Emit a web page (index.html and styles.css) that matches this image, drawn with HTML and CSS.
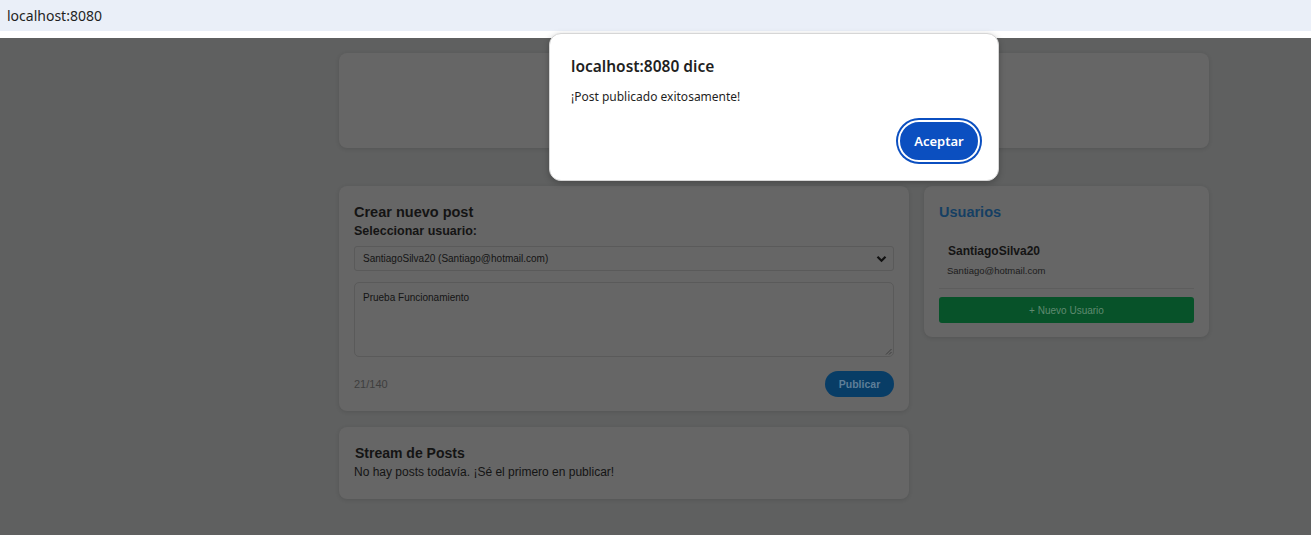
FILE: index.html
```html
<!DOCTYPE html>
<html lang="es">
<head>
<meta charset="utf-8">
<title>Mini Twitter</title>
<link rel="stylesheet" href="styles.css">
</head>
<body>
<div class="urlbar">localhost:8080</div>
<div class="urlgap"></div>
<main class="page">
  <div class="wrap">
    <header class="card header-card"></header>
    <div class="layout">
      <div class="col-main">
        <section class="card compose">
          <h2 class="card-title">Crear nuevo post</h2>
          <label class="field-label">Seleccionar usuario:</label>
          <div class="select">
            <span>SantiagoSilva20 (Santiago@hotmail.com)</span>
            <svg class="chev" width="11" height="8" viewBox="0 0 11 8"><path d="M1.5 1.8 L5.5 5.8 L9.5 1.8" fill="none" stroke="#111" stroke-width="2.2"/></svg>
          </div>
          <div class="textarea">
            <span>Prueba Funcionamiento</span>
            <svg class="grip" width="7" height="7" viewBox="0 0 7 7"><path d="M6.5 1 L1 6.5 M6.5 4 L4 6.5" stroke="#3a3a3a" stroke-width="0.9"/></svg>
          </div>
          <div class="compose-foot">
            <span class="counter">21/140</span>
            <button class="btn-publish">Publicar</button>
          </div>
        </section>
        <section class="card stream">
          <h2 class="card-title small">Stream de Posts</h2>
          <p class="empty">No hay posts todavía. ¡Sé el primero en publicar!</p>
        </section>
      </div>
      <aside class="card users">
        <h2 class="card-title blue">Usuarios</h2>
        <div class="user">
          <div class="user-name">SantiagoSilva20</div>
          <div class="user-mail">Santiago@hotmail.com</div>
        </div>
        <button class="btn-new">+ Nuevo Usuario</button>
      </aside>
    </div>
  </div>
</main>
<div class="dialog">
  <div class="dlg-title">localhost:8080 dice</div>
  <div class="dlg-msg">¡Post publicado exitosamente!</div>
  <div class="dlg-actions"><button class="dlg-btn">Aceptar</button></div>
</div>
</body>
</html>
```
FILE: styles.css
```css
* { box-sizing: border-box; }
html, body { margin: 0; padding: 0; }
body {
  background: #5f6060;
  font-family: "Liberation Sans", Arial, sans-serif;
  height: 535px;
  overflow: hidden;
  position: relative;
}
.urlbar {
  height: 31px;
  background: #eaeff8;
  color: #1f1f1f;
  font-family: "Noto Sans", "Open Sans", sans-serif;
  font-size: 14px;
  display: flex;
  align-items: center;
  padding-left: 7px;
  padding-bottom: 1px;
}
.urlgap { height: 7px; background: #ffffff; }
.page { padding-top: 15px; }
.wrap { width: 870px; margin-left: 339px; }
.card {
  background: #666666;
  border-radius: 8px;
  box-shadow: 0 1px 4px rgba(0,0,0,0.12);
}
.header-card { height: 95px; }
.layout {
  margin-top: 38px;
  display: grid;
  grid-template-columns: 570px 285px;
  gap: 15px;
  align-items: start;
}
.col-main { display: flex; flex-direction: column; gap: 16px; }
.compose { padding: 18px 15px 15px; height: 225px; }
.card-title {
  margin: 0;
  font-size: 14.5px;
  font-weight: bold;
  color: #141414;
  line-height: 17px;
}
.card-title.small { font-size: 14px; }
.card-title.blue { color: #153f63; }
.field-label {
  display: block;
  margin-top: 3px;
  font-size: 12.5px;
  font-weight: bold;
  color: #141414;
  line-height: 15px;
}
.select {
  margin-top: 7px;
  height: 25px;
  border: 1px solid #5a5a5a;
  border-radius: 3px;
  display: flex;
  align-items: center;
  justify-content: space-between;
  padding: 0 6px 0 8px;
  font-size: 10px;
  color: #141414;
}
.textarea {
  margin-top: 11px;
  height: 75px;
  border: 1px solid #5a5a5a;
  border-radius: 5px;
  padding: 9px 8px;
  font-size: 10px;
  color: #141414;
  position: relative;
}
.grip { position: absolute; right: 1px; bottom: 1px; }
.compose-foot {
  margin-top: 14px;
  display: flex;
  justify-content: space-between;
  align-items: center;
}
.counter { font-size: 11px; color: #3e3e3e; }
.btn-publish {
  height: 26px;
  width: 69px;
  border: none;
  border-radius: 13px;
  background: #083d66;
  color: #5f7f98;
  font-family: "Liberation Sans", Arial, sans-serif;
  font-size: 10.5px;
  font-weight: bold;
  padding: 0;
}
.stream { padding: 18px 16px 19px; height: 72px; }
.empty { margin: 3px 0 0; font-size: 12px; color: #141414; line-height: 14px; margin-left: -1px; }
.users { padding: 18px 15px 15px; height: 151px; }
.user {
  padding: 8px 9px 12px;
  border-bottom: 1px solid #5d5d5d;
  margin-top: 14px;
}
.user-name { font-size: 12px; font-weight: bold; color: #141414; line-height: 16px; }
.user-mail { font-size: 9.5px; color: #1c1c1c; margin-top: 6px; margin-left: -1px; }
.btn-new {
  margin-top: 8px;
  width: 100%;
  height: 26px;
  border: none;
  border-radius: 3px;
  background: #075229;
  color: #5f8a70;
  font-family: "Liberation Sans", Arial, sans-serif;
  font-size: 10px;
}
.dialog {
  position: absolute;
  left: 549px;
  top: 33px;
  width: 450px;
  height: 148px;
  background: #ffffff;
  border: 1px solid #d6d6d6;
  border-radius: 12px;
  box-shadow: 0 2px 6px rgba(0,0,0,0.25);
  padding: 22px 18px 0 21px;
  font-family: "Noto Sans", "Open Sans", sans-serif;
  color: #1f1f1f;
}
.dlg-title { font-size: 15.5px; font-weight: 600; line-height: 20px; }
.dlg-msg { margin-top: 13px; font-size: 12px; line-height: 16px; }
.dlg-actions { display: flex; justify-content: flex-end; margin-top: 15px; }
.dlg-btn {
  width: 82px;
  height: 42px;
  border-radius: 21px;
  background: #0b4fc0;
  color: #ffffff;
  border: 2px solid #ffffff;
  box-shadow: 0 0 0 2px #0b4fc0;
  font-family: "Noto Sans", "Open Sans", sans-serif;
  font-weight: 600;
  font-size: 13px;
  padding: 0;
}
```
